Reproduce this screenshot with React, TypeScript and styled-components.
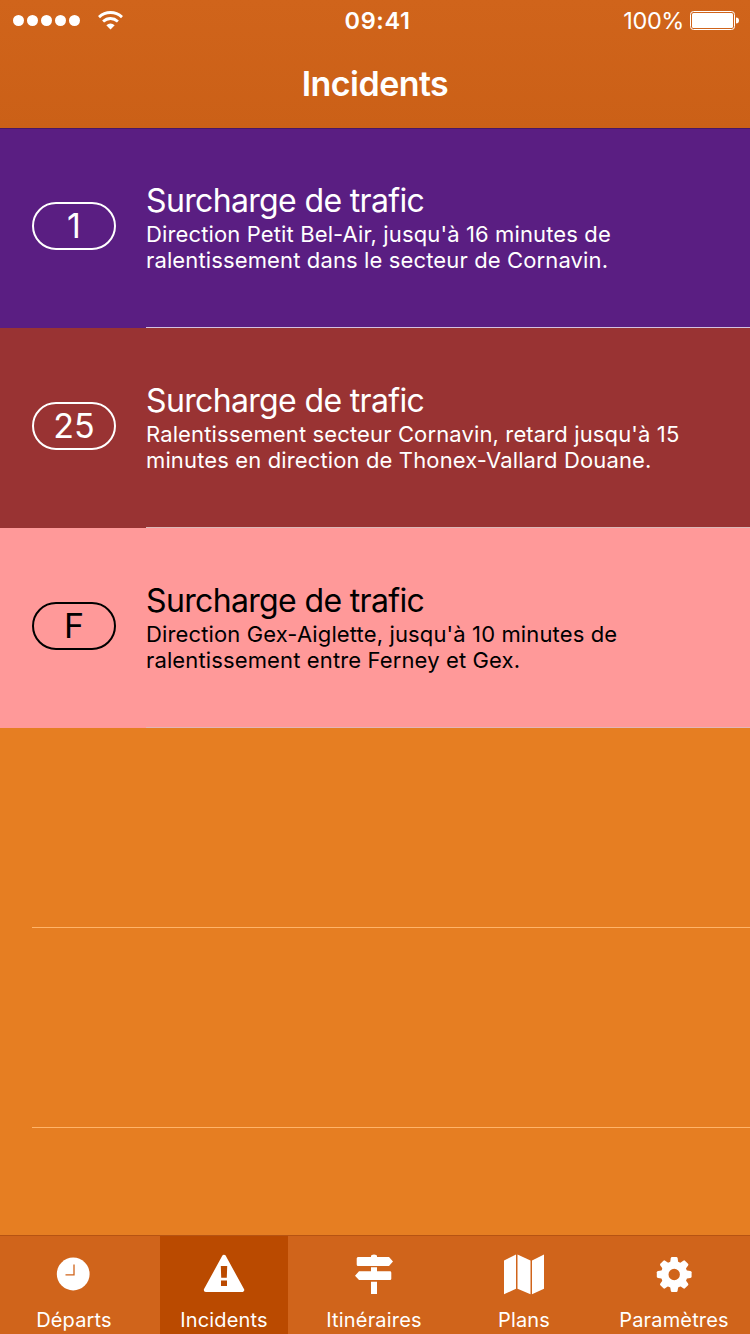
import React from 'react';
import styled, { createGlobalStyle } from 'styled-components';

const Global = createGlobalStyle`
  * { box-sizing: border-box; }
  body { margin: 0; font-family: Inter, sans-serif; background: #e67e22; }
`;

const Screen = styled.main`
  width: 750px;
  height: 1334px;
  display: flex;
  flex-direction: column;
  overflow: hidden;
  background: #e67e22;
`;

const Header = styled.header`
  height: 129px;
  flex: none;
  background: linear-gradient(#d0641b, #cb6017);
  border-bottom: 1px solid #471766;
  color: #fff;
`;

const StatusBar = styled.div`
  height: 40px;
  display: grid;
  grid-template-columns: 1fr auto 1fr;
  align-items: center;
  padding: 0 11px 0 13px;
  font-size: 24px;
`;

const Signal = styled.div`
  display: flex;
  align-items: center;
  gap: 3px;
`;

const Dot = styled.i`
  width: 11px;
  height: 11px;
  margin-top: 1px;
  border-radius: 50%;
  background: #fff;
`;

const WifiIcon = styled.svg`
  margin-left: 15px;
  display: block;
`;

const Clock = styled.span`
  padding: 1px 0 0 3px;
  font-size: 23.5px;
  font-weight: 600;
  letter-spacing: 0.6px;
`;

const Battery = styled.div`
  display: flex;
  align-items: center;
  justify-content: flex-end;
  gap: 6px;
  padding-top: 1px;
  font-size: 23.5px;
  letter-spacing: -0.4px;
`;

const Title = styled.h1`
  margin: 0;
  height: 88px;
  text-align: center;
  font-size: 34px;
  line-height: 88px;
  font-weight: 600;
  letter-spacing: -0.55px;
`;

const List = styled.section`
  flex: 1;
  min-height: 0;
  overflow: hidden;
`;

const Row = styled.article<{ $bg: string; $fg: string }>`
  height: 200px;
  display: flex;
  background: ${(p) => p.$bg};
  color: ${(p) => p.$fg};
  &:first-child { height: 199px; }
  &:first-child > * { margin-top: -1px; }
`;

const BadgeCell = styled.div`
  width: 146px;
  padding: 74px 0 0 32px;
`;

const LineBadge = styled.div`
  width: 84px;
  height: 48px;
  border: 2px solid currentColor;
  border-radius: 24px;
  font-size: 34px;
  line-height: 44px;
  text-align: center;
`;

const RowText = styled.div<{ $line: string }>`
  flex: 1;
  padding-top: 53px;
  border-bottom: 1px solid ${(p) => p.$line};
`;

const RowTitle = styled.h2`
  margin: 0;
  font-size: 32px;
  line-height: 40px;
  font-weight: 400;
  letter-spacing: -0.65px;
`;

const RowDetail = styled.p`
  margin: 0;
  font-size: 22px;
  line-height: 26px;
  letter-spacing: 0.13px;
  white-space: pre;
`;

const EmptyRow = styled.div`
  height: 200px;
  margin-left: 32px;
  border-bottom: 1px solid #ffb469;
`;

const TabBar = styled.nav`
  height: 99px;
  flex: none;
  display: flex;
  gap: 22px;
  padding-left: 10px;
  background: #d0641b;
  border-top: 1px solid #b65313;
`;

const Tab = styled.div<{ $active?: boolean }>`
  width: 128px;
  display: flex;
  flex-direction: column;
  align-items: center;
  background: ${(p) => (p.$active ? '#ba4a00' : 'transparent')};
  color: #fff;
  font-size: 20px;
  line-height: 24px;
  letter-spacing: 0.17px;
`;

const TabIcon = styled.svg`
  width: 44px;
  height: 44px;
  margin: 16px 0 12px;
  flex: none;
`;

const incidents = [
  { line: '1', bg: '#5a1e82', fg: '#fff', sep: '#d3c2df', text: "Direction Petit Bel-Air, jusqu'à 16 minutes de\nralentissement dans le secteur de Cornavin." },
  { line: '25', bg: '#993333', fg: '#fff', sep: '#dcb9b9', text: "Ralentissement secteur Cornavin, retard jusqu'à 15\nminutes en direction de Thonex-Vallard Douane." },
  { line: 'F', bg: '#ff9999', fg: '#000', sep: '#e3b5b8', text: "Direction Gex-Aiglette, jusqu'à 10 minutes de\nralentissement entre Ferney et Gex." },
];

const gearTeeth = [0, 45, 90, 135, 180, 225, 270, 315];

const tabs = [
  {
    label: 'Départs',
    icon: (
      <>
        <circle cx="21.2" cy="22" r="16.4" fill="#fff" />
        <path d="M22 12.5V22.8H13.5" fill="none" stroke="#d0641b" strokeWidth="1.3" />
      </>
    ),
  },
  {
    label: 'Incidents',
    icon: (
      <>
        <path d="M22 4.8 40.2 38H3.8Z" fill="#fff" stroke="#fff" strokeWidth="4" strokeLinejoin="round" />
        <path d="M18.8 14h6.4l-.4 11.8h-5.6ZM19 28.6h6v5.4h-6Z" fill="#ba4a00" />
      </>
    ),
  },
  {
    label: 'Itinéraires',
    icon: (
      <path
        transform="translate(0 -1)"
        fill="#fff"
        d="M19 5.3Q19 3.5 22 3.5T25 5.3V6H37L41 10.5 37 15H6Q4.7 15 4.7 13.5V7.5Q4.7 6 6 6H19ZM19 16.2h6V20.3H38q1.3 0 1.3 1.4v6q0 1.3-1.3 1.3H7L3 24.7 7 20.3H19ZM19 30.7h6V43H19Z"
      />
    ),
  },
  {
    label: 'Plans',
    icon: <path fill="#fff" d="M2 8.5 14 2.5V36.7L2 42.3ZM15.5 2.5 28.5 8.5V42.3L15.5 36.7ZM30 8.5 42 2.5V36.7L30 42.3Z" />,
  },
  {
    label: 'Paramètres',
    icon: (
      <>
        <g fill="#fff">
          {gearTeeth.map((a) => (
            <path key={a} transform={`rotate(${a} 22.2 22.5)`} d="M17.7 13 18.8 6.3Q19 5.1 20 5.1H24.4Q25.4 5.1 25.6 6.3L26.7 13Z" />
          ))}
        </g>
        <circle cx="22.2" cy="22.5" r="9.5" fill="none" stroke="#fff" strokeWidth="7.6" />
      </>
    ),
  },
];

export default function App() {
  return (
    <Screen>
      <Global />
      <Header>
        <StatusBar>
          <Signal>
            {[0, 1, 2, 3, 4].map((i) => <Dot key={i} />)}
            <WifiIcon width="26" height="20" viewBox="0.5 0 26 20">
              <g fill="none" stroke="#fff" strokeWidth="2.9">
                <path d="M1.5 7.1Q6.5 2.5 13 2.5T24.5 7.1" />
                <path d="M5.6 11.5Q9 8.5 13 8.5T20.4 11.5" />
              </g>
              <path fill="#fff" d="M8.8 15.2Q13 11.6 17.2 15.2L13 19.5Z" />
            </WifiIcon>
          </Signal>
          <Clock>09:41</Clock>
          <Battery>
            100%
            <svg width="49" height="20" viewBox="0 0 49 20">
              <rect x="0.5" y="0.5" width="44" height="18" rx="3" fill="none" stroke="#fff" />
              <rect x="2" y="2" width="41" height="15" rx="1.5" fill="#fff" />
              <path d="M46 6.5Q49 6.5 49 9.5T46 12.5Z" fill="#fff" />
            </svg>
          </Battery>
        </StatusBar>
        <Title>Incidents</Title>
      </Header>
      <List>
        {incidents.map((it) => (
          <Row key={it.line} $bg={it.bg} $fg={it.fg}>
            <BadgeCell><LineBadge>{it.line}</LineBadge></BadgeCell>
            <RowText $line={it.sep}>
              <RowTitle>Surcharge de trafic</RowTitle>
              <RowDetail>{it.text}</RowDetail>
            </RowText>
          </Row>
        ))}
        <EmptyRow />
        <EmptyRow />
      </List>
      <TabBar>
        {tabs.map((t, i) => (
          <Tab key={t.label} $active={i === 1}>
            <TabIcon viewBox="0 0 44 44">{t.icon}</TabIcon>
            {t.label}
          </Tab>
        ))}
      </TabBar>
    </Screen>
  );
}
